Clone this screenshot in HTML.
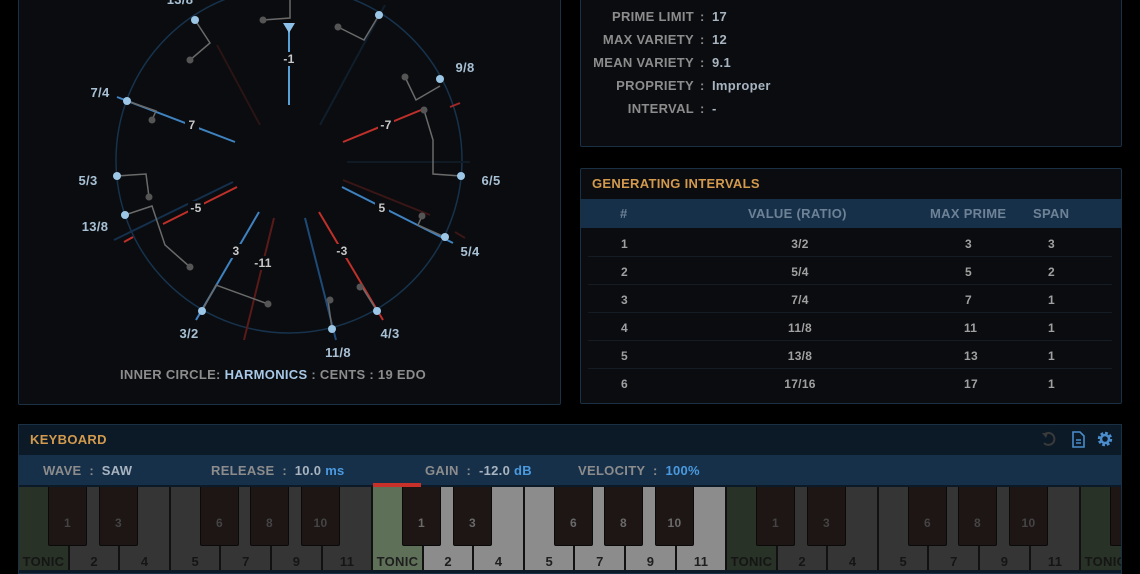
<!DOCTYPE html>
<html><head><meta charset="utf-8"><style>
*{margin:0;padding:0;box-sizing:border-box}
body{width:1140px;height:570px;background:#000;overflow:hidden;position:relative;font-family:"Liberation Sans",sans-serif;font-weight:bold;letter-spacing:0.3px}
.abs{position:absolute;white-space:nowrap}
.panel{position:absolute;background:#0a0c0f;border:1px solid #1a3045;border-radius:2px}
.lbl{color:#8c8c8c;font-size:13px}
.val{color:#a8b4c0;font-size:13px}
.or{color:#d39a4e;font-size:13px}
</style></head><body>

<div class="panel" style="left:18px;top:-5px;width:543px;height:410px"></div>
<svg class="abs" style="left:0;top:0" width="570" height="410">
<circle cx="289" cy="160" r="173" fill="none" stroke="#17324c" stroke-width="1.5"/>
<g stroke-width="2" fill="none">
<line x1="217" y1="45" x2="260" y2="125" stroke="#2a1414"/>
<line x1="320" y1="125" x2="385" y2="5" stroke="#101e2c"/>
<line x1="347" y1="162" x2="470" y2="162" stroke="#0f1a24"/>
<line x1="343" y1="180" x2="430" y2="215" stroke="#3a1616"/>
<line x1="450" y1="107" x2="460" y2="103" stroke="#a02828"/>
<line x1="455" y1="232" x2="465" y2="238" stroke="#3a1616"/>
<line x1="289" y1="28" x2="289" y2="105" stroke="#5aa0d8"/>
<line x1="117" y1="97" x2="235" y2="142" stroke="#3f82c0"/>
<line x1="343" y1="142" x2="421" y2="110" stroke="#c0302a"/>
<line x1="342" y1="187" x2="453" y2="243" stroke="#3f82c0"/>
<line x1="124" y1="242" x2="133" y2="237" stroke="#c0302a"/>
<line x1="163" y1="224" x2="237" y2="187" stroke="#c0302a"/>
<line x1="114" y1="240" x2="233" y2="182" stroke="#15304c"/>
<line x1="196" y1="320" x2="259" y2="212" stroke="#3f82c0"/>
<line x1="244" y1="340" x2="274" y2="218" stroke="#5a1a1a"/>
<line x1="336" y1="340" x2="305" y2="218" stroke="#1e4a78"/>
<line x1="383" y1="320" x2="319" y2="212" stroke="#c0302a"/>
</g>
<polygon points="283,23 295,23 289,33" fill="#8cc0e8"/>
<g stroke="#6a6a6a" stroke-width="1.5" fill="none">
<polyline points="263,20 290,18 290,0"/>
<polyline points="195,20 210,43 190,60"/>
<polyline points="379,15 364,40 338,27"/>
<polyline points="440,86 416,100 405,77"/>
<polyline points="127,101 156,111 152,120"/>
<polyline points="424,110 433,140 433,174 461,176"/>
<polyline points="117,176 146,174 149,197"/>
<polyline points="125,215 152,206 165,245 190,267"/>
<polyline points="445,237 418,225 422,216"/>
<polyline points="202,311 216,285 268,304"/>
<polyline points="332,329 328,300 330,300"/>
<polyline points="377,311 362,287"/>
</g>
<g fill="#555">
<circle cx="263" cy="20" r="3.5"/><circle cx="190" cy="60" r="3.5"/><circle cx="338" cy="27" r="3.5"/>
<circle cx="405" cy="77" r="3.5"/><circle cx="152" cy="120" r="3.5"/><circle cx="424" cy="110" r="3.5"/>
<circle cx="149" cy="197" r="3.5"/><circle cx="190" cy="267" r="3.5"/><circle cx="422" cy="216" r="3.5"/>
<circle cx="268" cy="304" r="3.5"/><circle cx="330" cy="300" r="3.5"/><circle cx="360" cy="287" r="3.5"/>
</g>
<g fill="#9cc6e6">
<circle cx="195" cy="20" r="4"/><circle cx="379" cy="15" r="4"/><circle cx="440" cy="79" r="4"/>
<circle cx="127" cy="101" r="4"/><circle cx="461" cy="176" r="4"/><circle cx="117" cy="176" r="4"/>
<circle cx="125" cy="215" r="4"/><circle cx="445" cy="237" r="4"/><circle cx="202" cy="311" r="4"/>
<circle cx="332" cy="329" r="4"/><circle cx="377" cy="311" r="4"/>
</g>
<g font-family="Liberation Sans" font-weight="bold" font-size="12" fill="#c8c8c8" text-anchor="middle">
<rect x="282" y="52" width="14" height="14" fill="#0a0c0f"/><text x="289" y="63">-1</text>
<rect x="185" y="118" width="14" height="14" fill="#0a0c0f"/><text x="192" y="129">7</text>
<rect x="378" y="118" width="16" height="14" fill="#0a0c0f"/><text x="386" y="129">-7</text>
<rect x="375" y="201" width="14" height="14" fill="#0a0c0f"/><text x="382" y="212">5</text>
<rect x="188" y="201" width="16" height="14" fill="#0a0c0f"/><text x="196" y="212">-5</text>
<rect x="229" y="244" width="14" height="14" fill="#0a0c0f"/><text x="236" y="255">3</text>
<rect x="253" y="256" width="20" height="14" fill="#0a0c0f"/><text x="263" y="267">-11</text>
<rect x="334" y="244" width="16" height="14" fill="#0a0c0f"/><text x="342" y="255">-3</text>
</g>
<g font-family="Liberation Sans" font-weight="bold" font-size="13" fill="#a8c0d4" text-anchor="middle">
<text x="180" y="4">13/8</text><text x="465" y="72">9/8</text><text x="100" y="97">7/4</text>
<text x="491" y="185">6/5</text><text x="88" y="185">5/3</text><text x="95" y="231">13/8</text>
<text x="470" y="256">5/4</text><text x="189" y="338">3/2</text><text x="338" y="357">11/8</text>
<text x="390" y="338">4/3</text>
</g>
<text x="273" y="379" text-anchor="middle" font-family="Liberation Sans" font-weight="bold" font-size="13" letter-spacing="0.3" fill="#8c8c8c">INNER CIRCLE: <tspan fill="#a8c8e8">HARMONICS</tspan> : CENTS : 19 EDO</text>
</svg>

<div class="panel" style="left:580px;top:-5px;width:542px;height:152px"></div>
<div class="abs lbl" style="left:580px;top:5px;width:114px;text-align:right;line-height:23px">PRIME LIMIT<br>MAX VARIETY<br>MEAN VARIETY<br>PROPRIETY<br>INTERVAL</div>
<div class="abs lbl" style="left:700px;top:5px;line-height:23px">:<br>:<br>:<br>:<br>:</div>
<div class="abs val" style="left:712px;top:5px;line-height:23px">17<br>12<br>9.1<br>Improper<br>-</div>

<div class="panel" style="left:580px;top:168px;width:542px;height:236px"></div>
<div class="abs or" style="left:592px;top:176px">GENERATING INTERVALS</div>
<div class="abs" style="left:581px;top:199px;width:540px;height:29px;background:#17304a"></div>
<div class="abs" style="left:0;top:206px;font-size:13px;color:#6e8296">
<span class="abs" style="left:620px">#</span><span class="abs" style="left:748px">VALUE (RATIO)</span><span class="abs" style="left:930px">MAX PRIME</span><span class="abs" style="left:1033px">SPAN</span></div>
<div class="abs" style="left:588px;top:229px;width:524px;font-size:12px;color:#a0a0a0">
<div style="height:28px;border-bottom:1px solid #161c24;position:relative"><span class="abs" style="left:33px;top:8px">1</span><span class="abs" style="left:190px;top:8px;width:44px;text-align:center">3/2</span><span class="abs" style="left:377px;top:8px">3</span><span class="abs" style="left:460px;top:8px">3</span></div>
<div style="height:28px;border-bottom:1px solid #161c24;position:relative"><span class="abs" style="left:33px;top:8px">2</span><span class="abs" style="left:190px;top:8px;width:44px;text-align:center">5/4</span><span class="abs" style="left:377px;top:8px">5</span><span class="abs" style="left:460px;top:8px">2</span></div>
<div style="height:28px;border-bottom:1px solid #161c24;position:relative"><span class="abs" style="left:33px;top:8px">3</span><span class="abs" style="left:190px;top:8px;width:44px;text-align:center">7/4</span><span class="abs" style="left:377px;top:8px">7</span><span class="abs" style="left:460px;top:8px">1</span></div>
<div style="height:28px;border-bottom:1px solid #161c24;position:relative"><span class="abs" style="left:33px;top:8px">4</span><span class="abs" style="left:190px;top:8px;width:44px;text-align:center">11/8</span><span class="abs" style="left:376px;top:8px">11</span><span class="abs" style="left:460px;top:8px">1</span></div>
<div style="height:28px;border-bottom:1px solid #161c24;position:relative"><span class="abs" style="left:33px;top:8px">5</span><span class="abs" style="left:190px;top:8px;width:44px;text-align:center">13/8</span><span class="abs" style="left:376px;top:8px">13</span><span class="abs" style="left:460px;top:8px">1</span></div>
<div style="height:28px;position:relative"><span class="abs" style="left:33px;top:8px">6</span><span class="abs" style="left:190px;top:8px;width:44px;text-align:center">17/16</span><span class="abs" style="left:376px;top:8px">17</span><span class="abs" style="left:460px;top:8px">1</span></div>
</div>

<div class="abs" style="left:18px;top:424px;width:1104px;height:150px;background:#0b1a26;border:1px solid #1a3045"></div>
<div class="abs or" style="left:30px;top:432px">KEYBOARD</div>
<svg class="abs" style="left:1040px;top:430px" width="80" height="20">
<path d="M5 4 A6 6 0 1 1 4 13" fill="none" stroke="#3a3a3a" stroke-width="2"/><path d="M2 3 L8 3 L6 8 Z" fill="#3a3a3a"/>
<path d="M33 2 H40 L44 6 V17 H33 Z" fill="none" stroke="#4a8ccc" stroke-width="1.6"/><path d="M36 10 H41 M36 13 H41" stroke="#4a8ccc" stroke-width="1.4"/>
<circle cx="65" cy="9" r="5.5" fill="none" stroke="#4a8ccc" stroke-width="3.5" stroke-dasharray="2.6 1.7"/><circle cx="65" cy="9" r="4" fill="none" stroke="#4a8ccc" stroke-width="2.5"/>
</svg>
<div class="abs" style="left:19px;top:455px;width:1102px;height:30px;background:#17304a"></div>
<div class="abs lbl" style="left:43px;top:463px;white-space:pre">WAVE  :  <span style="color:#a8b4c0">SAW</span></div>
<div class="abs lbl" style="left:211px;top:463px;white-space:pre">RELEASE  :  <span style="color:#a8b4c0">10.0 <span style="color:#4a9ae0">ms</span></span></div>
<div class="abs lbl" style="left:425px;top:463px;white-space:pre">GAIN  :  <span style="color:#a8b4c0">-12.0 <span style="color:#4a9ae0">dB</span></span></div>
<div class="abs lbl" style="left:578px;top:463px;white-space:pre">VELOCITY  :  <span style="color:#4a9ae0">100%</span></div>
<div class="abs" style="left:373px;top:483px;width:48px;height:4px;background:#c8302a"></div>
<div id="kb" class="abs" style="left:19px;top:487px;width:1102px;height:83px;overflow:hidden"></div>
<script>
var kb=document.getElementById('kb'),h='';
var wl=['TONIC','2','4','5','7','9','11'],bo=[30,81,182,232,283],bl=['1','3','6','8','10'];
for(var o=0;o<4;o++){var x0=o*354,br=(o==1);
for(var i=0;i<7;i++){var x=x0+i*50.6,c=i==0?(br?'#5f7058':'#283226'):(br?'#8c8c8c':'#353535');
h+='<div class="abs" style="left:'+x+'px;top:0;width:50.6px;height:83px;background:'+c+';border-right:2px solid #111"><div class="abs" style="left:0;width:49px;top:67px;text-align:center;font-size:13px;color:'+(br?'#1e1e1e':'#151515')+'">'+wl[i]+'</div></div>';}
for(var j=0;j<5;j++){h+='<div class="abs" style="left:'+(x0+bo[j]-1)+'px;top:0;width:39px;height:59px;background:#1e1515;border:1px solid #0a0a0a;border-top:none;border-radius:0 0 2px 2px;text-align:center;font-size:12px;line-height:72px;color:'+(br?'#6a6a6a':'#444')+'">'+bl[j]+'</div>';}}
kb.innerHTML=h;
</script>
</body></html>
